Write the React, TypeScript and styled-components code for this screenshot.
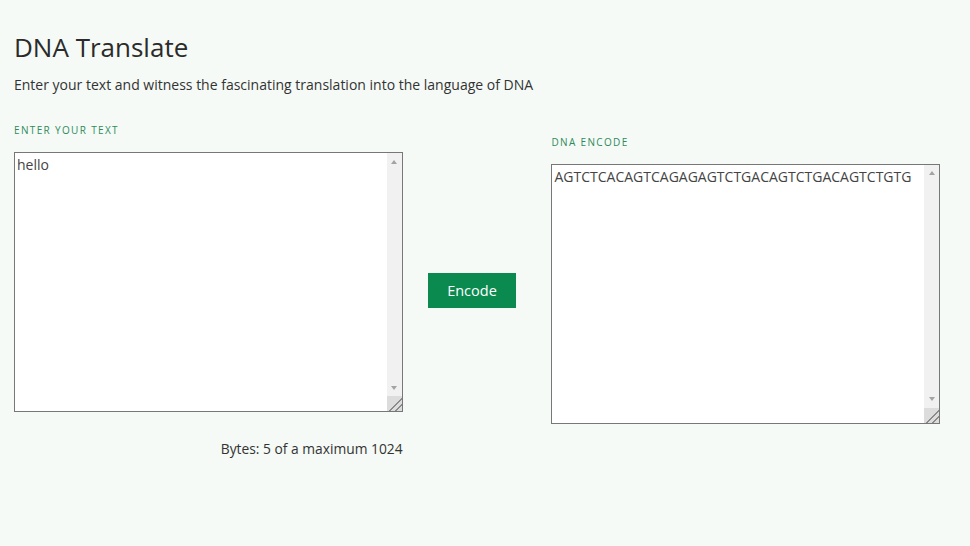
import styled, { createGlobalStyle } from 'styled-components';

const GlobalStyle = createGlobalStyle`
  body {
    margin: 0;
    background: #f5faf6;
    font-family: 'Open Sans', 'DejaVu Sans', sans-serif;
    color: #2b2b2b;
  }
`;

const Page = styled.main`
  padding: 30px 30px 0 14px;
`;

const Title = styled.h1`
  margin: 0;
  font-size: 26px;
  font-weight: 400;
  line-height: 34px;
`;

const Lead = styled.p`
  margin: 12px 0 0;
  font-size: 14px;
  line-height: 18px;
  color: #333;
`;

const Workspace = styled.section`
  display: flex;
  align-items: center;
  margin-top: 29px;
`;

const Column = styled.div<{ $offset?: number }>`
  display: flex;
  flex-direction: column;
  width: 389px;
  margin-top: ${(p) => p.$offset ?? 0}px;
`;

const Label = styled.label`
  font-size: 10px;
  letter-spacing: 1.35px;
  text-transform: uppercase;
  color: #2f8a5c;
  margin-bottom: 15px;
`;

/*
 *  textarea with a classic scrollbar gutter
 */
const FieldBox = styled.div`
  box-sizing: border-box;
  display: flex;
  height: 260px;
  border: 1px solid #777;
  background: #fff;
`;

const Field = styled.textarea`
  flex: 1;
  margin: 0;
  padding: 2px;
  border: none;
  outline: none;
  background: transparent;
  font-family: inherit;
  font-size: 14px;
  line-height: 20px;
  color: #444;
  resize: none;
  overflow: hidden;
`;

const Gutter = styled.div`
  display: flex;
  flex-direction: column;
  width: 15px;
  background: #f1f1f1;
`;

const Arrow = styled.div<{ $down?: boolean }>`
  display: flex;
  align-items: center;
  justify-content: center;
  height: 17px;

  &::before {
    content: '';
    border-left: 3px solid transparent;
    border-right: 3px solid transparent;
    ${(p) =>
      p.$down ? 'border-top: 4px solid #a3a3a3;' : 'border-bottom: 4px solid #a3a3a3;'}
  }
`;

const Track = styled.div`
  flex: 1;
`;

const Grip = styled.div`
  height: 15px;
  background: linear-gradient(
    135deg,
    #dcdcdc 0 56%,
    #8a8a8a 56% 61%,
    #dcdcdc 61% 76%,
    #8a8a8a 76% 81%,
    #dcdcdc 81%
  );
`;

type TextBoxProps = {
  id: string;
  value: string;
  readOnly?: boolean;
};

const TextBox = ({ id, value, readOnly }: TextBoxProps) => (
  <FieldBox>
    <Field id={id} defaultValue={value} readOnly={readOnly} />
    <Gutter>
      <Arrow />
      <Track />
      <Arrow $down />
      <Grip />
    </Gutter>
  </FieldBox>
);

const Counter = styled.div`
  margin-top: 27px;
  text-align: right;
  font-size: 13.8px;
  color: #333;
`;

const EncodeButton = styled.button`
  margin: 0 35px 0 25px;
  width: 89px;
  height: 35px;
  border: none;
  background: #0a8a4f;
  color: #fff;
  font-family: inherit;
  font-size: 14.5px;
  cursor: pointer;
`;

export default function App() {
  return (
    <>
      <GlobalStyle />
      <Page>
        <Title>DNA Translate</Title>
        <Lead>Enter your text and witness the fascinating translation into the language of DNA</Lead>
        <Workspace>
          <Column>
            <Label htmlFor="plain">Enter your text</Label>
            <TextBox id="plain" value="hello" />
            <Counter>Bytes: 5 of a maximum 1024</Counter>
          </Column>
          <EncodeButton>Encode</EncodeButton>
          <Column $offset={-23}>
            <Label htmlFor="dna">DNA Encode</Label>
            <TextBox id="dna" readOnly value="AGTCTCACAGTCAGAGAGTCTGACAGTCTGACAGTCTGTG" />
          </Column>
        </Workspace>
      </Page>
    </>
  );
}
